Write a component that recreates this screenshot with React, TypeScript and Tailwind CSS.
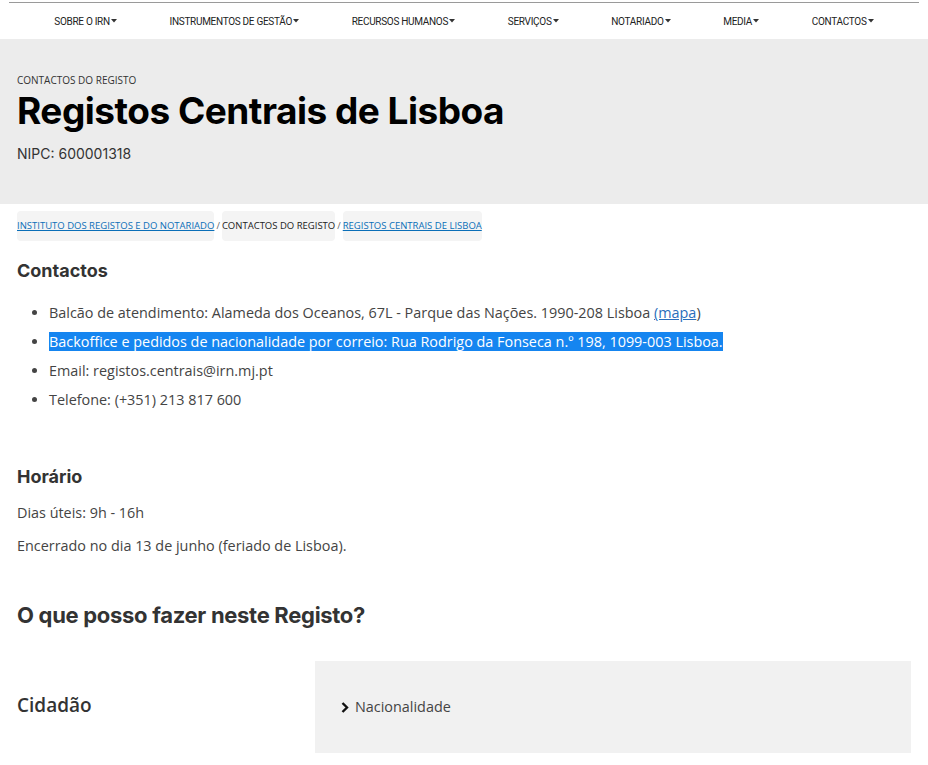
import React from 'react';

const navItems = ['SOBRE O IRN', 'INSTRUMENTOS DE GESTÃO', 'RECURSOS HUMANOS', 'SERVIÇOS', 'NOTARIADO', 'MEDIA', 'CONTACTOS'];

const heading = { fontFamily: 'Inter, Lato, sans-serif' };
const body = { fontFamily: '"Open Sans", sans-serif' };

const Caret = () => (
  <svg width="6" height="4" viewBox="0 0 6 4" className="ml-[1px] inline-block">
    <path d="M0 0 L6 0 L3 3.5 Z" fill="#333" />
  </svg>
);

export default function App() {
  return (
    <div className="w-[928px] bg-white text-[#333]" style={body}>
      <div className="mx-[9px] mt-[2px] border-t border-[#9a9a9a]" />
      <nav className="flex h-[36px] items-center justify-around px-[28px] text-[10px] tracking-[-0.3px] text-[#222]" style={{ fontFamily: 'Roboto, sans-serif' }}>
        {navItems.map((n) => (
          <span key={n} className="flex items-center">{n}<Caret /></span>
        ))}
      </nav>

      <header className="h-[165px] bg-[#ececec] px-[17px] pt-[34px]">
        <div className="text-[10px] uppercase text-[#333]">Contactos do Registo</div>
        <h1 className="mt-[1px] text-[37px] font-bold leading-[44px] tracking-[-0.5px] text-black" style={heading}>Registos Centrais de Lisboa</h1>
        <p className="mt-[10px] text-[14px] text-[#333]" style={heading}>NIPC: 600001318</p>
      </header>

      <main className="px-[17px]">
        <div className="mt-[7px] flex items-center text-[9.5px] leading-[30px]">
          <a className="rounded-[4px] bg-[#f4f4f4] text-[#0b6fb8] underline">INSTITUTO DOS REGISTOS E DO NOTARIADO</a>
          <span className="px-[2px] text-[#666]">/</span>
          <span className="rounded-[4px] bg-[#f4f4f4] text-[#222]">CONTACTOS DO REGISTO</span>
          <span className="px-[2px] text-[#666]">/</span>
          <a className="rounded-[4px] bg-[#f4f4f4] text-[#0b6fb8] underline">REGISTOS CENTRAIS DE LISBOA</a>
        </div>

        <h2 className="mt-[16px] text-[18px] font-bold text-[#333]" style={heading}>Contactos</h2>
        <ul className="mt-[14px] list-disc pl-[32px] text-[14.4px] leading-[29px] text-[#444]">
          <li>Balcão de atendimento: Alameda dos Oceanos, 67L - Parque das Nações. 1990-208 Lisboa <a className="text-[#2a6ebb] underline">(mapa</a>)</li>
          <li><span className="bg-[#1585f0] text-white">Backoffice e pedidos de nacionalidade por correio: Rua Rodrigo da Fonseca n.º 198, 1099-003 Lisboa.</span></li>
          <li>Email: registos.centrais@irn.mj.pt</li>
          <li>Telefone: (+351) 213 817 600</li>
        </ul>

        <h2 className="mt-[49px] text-[18px] font-bold text-[#333]" style={heading}>Horário</h2>
        <p className="mt-[12px] text-[14.4px] text-[#444]">Dias úteis: 9h - 16h</p>
        <p className="mt-[11px] text-[14.4px] text-[#444]">Encerrado no dia 13 de junho (feriado de Lisboa).</p>

        <h2 className="mt-[43px] text-[22px] font-bold tracking-[-0.3px] text-[#333]" style={heading}>O que posso fazer neste Registo?</h2>

        <div className="mt-[29px] flex pb-[12px]">
          <div className="flex w-[298px] items-center pb-[4px] text-[19px] font-semibold text-[#333]">Cidadão</div>
          <div className="flex h-[92px] flex-1 items-center bg-[#f1f1f1] pl-[26px] text-[14.4px] text-[#444]">
            <svg width="8" height="11" viewBox="0 0 8 11" className="mr-[6px]">
              <path d="M1.5 1 L6 5.5 L1.5 10" stroke="#111" strokeWidth="2.4" fill="none" />
            </svg>
            Nacionalidade
          </div>
        </div>
      </main>
    </div>
  );
}
